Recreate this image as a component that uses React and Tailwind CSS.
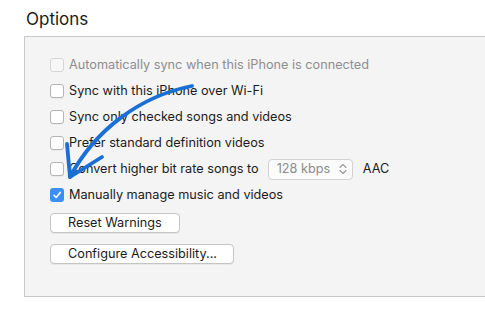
import React from 'react';

const font = { fontFamily: 'Inter, "Liberation Sans", Arial, sans-serif' };

const Check = ({ checked, disabled }) => {
  if (checked) {
    return (
      <span className="flex h-[14px] w-[14px] shrink-0 items-center justify-center rounded-[3px] bg-[#3b8ff5]">
        <svg width="10" height="10" viewBox="0 0 10 10">
          <path d="M2 5.3 L4.2 7.5 L8.2 2.4" fill="none" stroke="#fff" strokeWidth="1.6" strokeLinecap="round" strokeLinejoin="round" />
        </svg>
      </span>
    );
  }
  return (
    <span
      className={`h-[14px] w-[14px] shrink-0 rounded-[3px] border ${
        disabled ? 'border-[#d6d6d6] bg-[#f7f7f7]' : 'border-[#b4b4b4] bg-white shadow-[0_1px_0_rgba(0,0,0,0.04)]'
      }`}
    />
  );
};

const Row = ({ label, checked, disabled, children }) => (
  <div className="flex h-[26px] items-center">
    <Check checked={checked} disabled={disabled} />
    <span className={`ml-[5px] text-[12.7px] ${disabled ? 'text-[#8e8e8e]' : 'text-[#1b1b1b]'}`}>{label}</span>
    {children}
  </div>
);

const Button = ({ children, w }) => (
  <button className={`flex h-[20px] ${w} items-center rounded-[4px] border border-[#c4c4c4] bg-white pl-[17px] text-[12.7px] text-[#1b1b1b] shadow-[0_1px_0_rgba(0,0,0,0.05)]`}>
    {children}
  </button>
);

export default function App() {
  return (
    <div className="relative h-[319px] w-[485px] overflow-hidden bg-white" style={font}>
      <div className="pl-[26px] pt-[8px] text-[17px] leading-[22px] text-[#1b1b1b]">Options</div>
      <div className="ml-[24px] mt-[6px] h-[261px] w-[480px] border border-[#c9c9c9] bg-[#f4f4f4] pl-[25px] pt-[15px]">
        <Row label="Automatically sync when this iPhone is connected" disabled />
        <Row label="Sync with this iPhone over Wi-Fi" />
        <Row label="Sync only checked songs and videos" />
        <Row label="Prefer standard definition videos" />
        <Row label="Convert higher bit rate songs to">
          <div className="ml-[9px] flex h-[21px] w-[85px] items-center rounded-[4px] border border-[#d2d2d2] bg-[#fbfbfb] pl-[8px] pr-[5px] text-[12.7px] text-[#8c8c8c]">
            <span className="flex-1">128 kbps</span>
            <svg width="8" height="12" viewBox="0 0 8 12">
              <path d="M1 4.5 L4 1.5 L7 4.5 M1 7.5 L4 10.5 L7 7.5" fill="none" stroke="#9a9a9a" strokeWidth="1.1" strokeLinecap="round" strokeLinejoin="round" />
            </svg>
          </div>
          <span className="ml-[10px] text-[12.7px] text-[#1b1b1b]">AAC</span>
        </Row>
        <Row label="Manually manage music and videos" checked />
        <div className="mt-[5px]">
          <Button w="w-[130px]">Reset Warnings</Button>
        </div>
        <div className="mt-[11px]">
          <Button w="w-[184px]">Configure Accessibility...</Button>
        </div>
      </div>
      <svg className="pointer-events-none absolute left-0 top-0" width="485" height="319" viewBox="0 0 485 319">
        <path d="M192 86 C 140 96, 95 130, 70 177" fill="none" stroke="#1a6fd6" strokeWidth="3.8" strokeLinecap="round" />
        <path d="M67 144 L 70 177 L 102 157" fill="none" stroke="#1a6fd6" strokeWidth="3.8" strokeLinecap="round" strokeLinejoin="round" />
      </svg>
    </div>
  );
}
